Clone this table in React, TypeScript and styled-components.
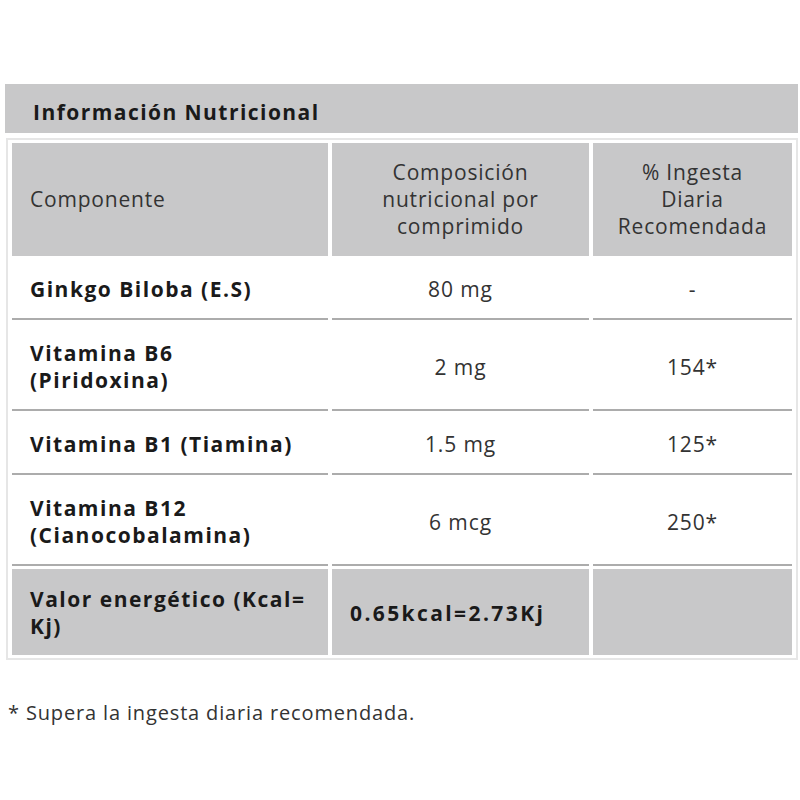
import React from "react"
import styled, { createGlobalStyle } from "styled-components"

const GlobalStyle = createGlobalStyle`
  html, body {
    margin: 0;
    padding: 0;
    background: #ffffff;
  }
  body {
    font-family: "Open Sans", "Noto Sans", sans-serif;
    color: #2b2b2b;
  }
`

const Page = styled.div`
  padding: 84px 2px 0 5px;
`

const TitleBar = styled.div`
  display: flex;
  align-items: center;
  height: 49px;
  padding: 6px 0 0 28px;
  box-sizing: border-box;
  background: #c8c8c9;
  font-size: 21px;
  font-weight: 700;
  color: #1a1a1a;
  letter-spacing: 1.45px;
`

const Table = styled.table`
  width: calc(100% - 1px);
  margin: 5px 0 0 1px;
  border: 2px solid #e6e6e6;
  border-spacing: 4px 3px;
  table-layout: fixed;
`

const HeadCell = styled.th<{ $align?: string }>`
  background: #c8c8c9;
  padding: 16px 18px;
  font-size: 21px;
  line-height: 27px;
  font-weight: 400;
  letter-spacing: 0.8px;
  color: #333333;
  text-align: ${p => p.$align || "center"};
  vertical-align: middle;
`

const Cell = styled.td<{ $bold?: boolean; $align?: string; $shaded?: boolean; $spacing?: number }>`
  padding: 17px 18px 15px;
  font-size: 21px;
  line-height: 27px;
  font-weight: ${p => (p.$bold ? 700 : 400)};
  letter-spacing: ${p => (p.$spacing ?? (p.$bold ? 1.5 : 0.9)) + "px"};
  color: ${p => (p.$bold ? "#1a1a1a" : "#333333")};
  text-align: ${p => p.$align || "center"};
  vertical-align: middle;
  background: ${p => (p.$shaded ? "#c8c8c9" : "transparent")};
  border-bottom: ${p => (p.$shaded ? "none" : "2px solid #acacac")};
  white-space: nowrap;
`

const Footnote = styled.p`
  margin: 39px 0 0 3px;
  font-size: 20px;
  letter-spacing: 0.85px;
  color: #333333;
`

interface Row {
  name: React.ReactNode
  amount: string
  daily: string
}

const rows: Row[] = [
  { name: "Ginkgo Biloba (E.S)", amount: "80 mg", daily: "-" },
  { name: <>Vitamina B6<br />(Piridoxina)</>, amount: "2 mg", daily: "154*" },
  { name: "Vitamina B1 (Tiamina)", amount: "1.5 mg", daily: "125*" },
  { name: <>Vitamina B12<br />(Cianocobalamina)</>, amount: "6 mcg", daily: "250*" },
]

export default function App() {
  return (
    <Page>
      <GlobalStyle />
      <TitleBar>Información Nutricional</TitleBar>
      <Table>
        <colgroup>
          <col style={{ width: "316px" }} />
          <col style={{ width: "257px" }} />
          <col />
        </colgroup>
        <thead>
          <tr>
            <HeadCell $align="left">Componente</HeadCell>
            <HeadCell>
              Composición<br />nutricional por<br />comprimido
            </HeadCell>
            <HeadCell>
              % Ingesta<br />Diaria<br />Recomendada
            </HeadCell>
          </tr>
        </thead>
        <tbody>
          {rows.map((r, i) => (
            <tr key={i}>
              <Cell $bold $align="left">{r.name}</Cell>
              <Cell>{r.amount}</Cell>
              <Cell>{r.daily}</Cell>
            </tr>
          ))}
          <tr>
            <Cell $bold $shaded $align="left">
              Valor energético (Kcal=<br />Kj)
            </Cell>
            <Cell $bold $shaded $align="left" $spacing={2.4}>0.65kcal=2.73Kj</Cell>
            <Cell $shaded />
          </tr>
        </tbody>
      </Table>
      <Footnote>* Supera la ingesta diaria recomendada.</Footnote>
    </Page>
  )
}
